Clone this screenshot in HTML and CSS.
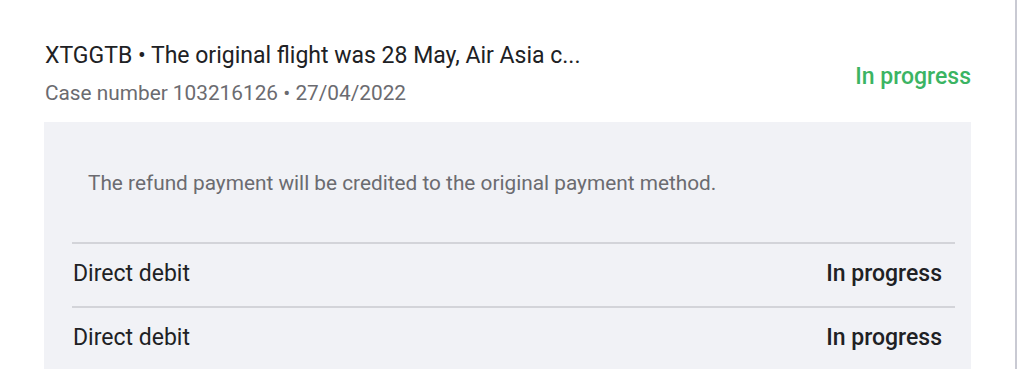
FILE: index.html
```html
<!DOCTYPE html>
<html lang="en">
<head>
  <meta charset="UTF-8">
  <meta name="viewport" content="width=device-width, initial-scale=1.0">
  <title>Refund case</title>
  <link rel="stylesheet" href="styles.css">
</head>
<body>
  <div class="page">
    <div class="case">
      <div class="case-header">
        <div class="case-info">
          <h2 class="case-title">XTGGTB &bull; The original flight was 28 May, Air Asia c...</h2>
          <p class="case-meta">Case number 103216126 &bull; 27/04/2022</p>
        </div>
        <span class="case-status">In progress</span>
      </div>
      <div class="case-details">
        <p class="details-note">The refund payment will be credited to the original payment method.</p>
        <ul class="payments">
          <li class="payment-row">
            <span>Direct debit</span>
            <strong>In progress</strong>
          </li>
          <li class="payment-row">
            <span>Direct debit</span>
            <strong>In progress</strong>
          </li>
        </ul>
      </div>
    </div>
  </div>
</body>
</html>
```
FILE: styles.css
```css
/* Refund case card */
body {
  font-family: Roboto, "Noto Sans", Arial, sans-serif;
  margin: 0;
  padding: 0;
  background: #fff;
  color: #202124;
}
.page {
  height: 369px;
  overflow: hidden;
  border-right: 2px solid #c9cad3;
  width: 1015px;
}
.case {
  padding: 39px 44px 0 44px;
}
.case-header {
  display: flex;
  align-items: center;
  justify-content: space-between;
  padding-left: 1px;
  margin-bottom: 9px;
}
.case-title {
  margin: 0;
  font-size: 23px;
  font-weight: 400;
  line-height: 34px;
  color: #202124;
}
.case-meta {
  margin: 0;
  font-size: 20.8px;
  line-height: 40px;
  color: #6b6b70;
}
.case-status {
  font-size: 23px;
  font-weight: 500;
  color: #3bb463;
}
.case-details {
  background: #f1f2f6;
  padding: 46px 16px 0 28px;
  min-height: 300px;
}
.details-note {
  margin: 0 0 44px 16px;
  font-size: 20.8px;
  line-height: 30px;
  color: #6b6b70;
}
.payments {
  list-style: none;
  margin: 0;
  padding: 0;
}
.payment-row {
  display: flex;
  justify-content: space-between;
  align-items: center;
  border-top: 2px solid #d3d4d9;
  padding: 0 13px 4px 1px;
  height: 58px;
  font-size: 23px;
}
.payment-row strong {
  font-weight: 500;
}
```
